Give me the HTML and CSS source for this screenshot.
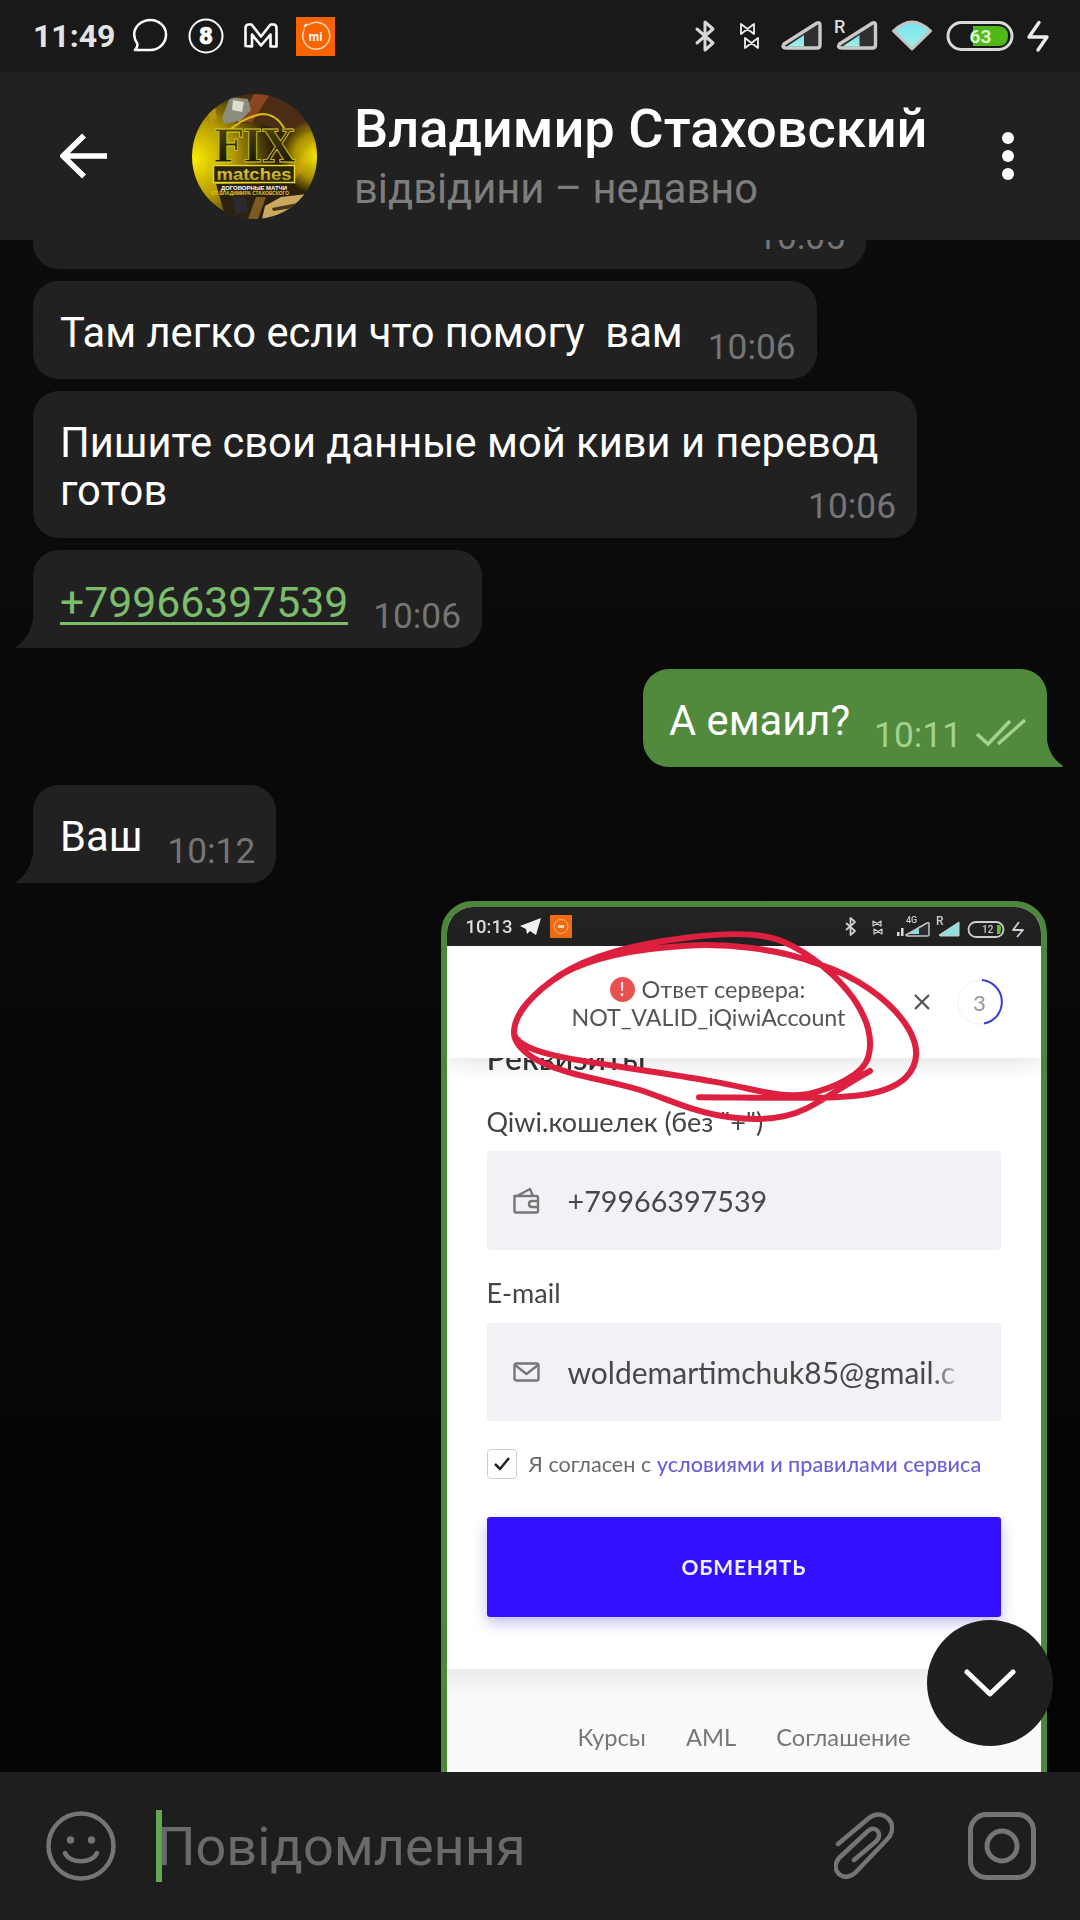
FILE: index.html
```html
<!DOCTYPE html>
<html lang="uk">
<head>
<meta charset="utf-8">
<title>Владимир Стаховский</title>
<link rel="stylesheet" href="styles.css">
</head>
<body>
<div class="app">
  <div class="statusbar">
    <span class="clock">11:49</span>
    <svg class="sb-icon" width="35" height="36" viewBox="133 18 36 36"><path class="ln" d="M151 19.500c8.500 0 16 6.500 16 15s-7 16-16 16c-2 0-3-.2-5-.2H135c2-2 3-4 2.500-6.300-2-3-3.300-6-3.300-9.500 0-8.500 7.800-15 16.800-15z"/></svg>
    <svg class="sb-icon" width="36" height="36" viewBox="187.500 17 36 36"><circle class="ln ln-thin" cx="205.500" cy="35" r="16.500"/><text class="ball-8" x="205.500" y="43">8</text></svg>
    <svg class="sb-icon sb-icon-m" width="34" height="26" viewBox="244 22 34 26"><path class="ln" d="M245.500 45V27q0-3.500 3.500-3.500h2.500L261 35.500l9.500-12h3q3 0 3 3.500v18.500h-6V33.500l-9.500 11-9-11v12z"/></svg>
    <svg class="sb-icon" width="39" height="39" viewBox="296 16 39 39"><rect x="296" y="16" width="39" height="39" fill="#f96400"/><path class="mi-ring" d="M308 24a13.500 13.500 0 1 1-3.500 4"/><path class="mi-tick" d="M304 26l3-3"/><text class="mi-text" x="315.500" y="40">mi</text></svg>
    <svg class="sb-right" width="356" height="40" viewBox="693 16 356 40">
      <defs><linearGradient id="cy" x1="0" y1="0" x2="0" y2="1"><stop offset="0" stop-color="#76e2f2"/><stop offset="1" stop-color="#a3f0e4"/></linearGradient></defs>
      <path class="sr" d="M697 29l16 14-8 7V22l8 7-16 14"/>
      <path class="sr sr-thin" d="M741 24l13 10V24l-13 10zM745 38l13 10V38l-13 10z"/>
      <path class="sig" d="M784 44l33-21q3-1.500 3 2.500V45q0 3-3 3H786q-4.500 0-2-4z"/>
      <path fill="url(#cy)" d="M787 46.500l17-11.500v11.500z"/>
      <text class="sr-r" x="834" y="33">R</text>
      <path class="sig" d="M839.500 44l33-21q3-1.500 3 2.500V45q0 3-3 3h-31q-4.500 0-2-4z"/>
      <path fill="url(#cy)" d="M842.500 46.500l17-11.500v11.500z"/>
      <path class="wifi" fill="url(#cy)" d="M893.500 31q18.500-18 37 0l-18.500 18z"/>
      <rect class="batt" x="948" y="22.500" width="64" height="27" rx="13.500"/>
      <path class="batt-fill" d="M973 26h25q10 0 10 10t-10 10h-25z"/>
      <text class="batt-text" x="980.500" y="43">63</text>
      <path class="sr sr-bolt" d="M1039 22.500l-10 14.500h18l-9 13"/>
    </svg>
  </div>

  <header class="topbar">
    <svg class="back" width="47" height="46" viewBox="0 0 47 46"><path d="M47 23H3M24 2.500L3 23l21 20.500"/></svg>
    <svg class="avatar" width="125" height="125" viewBox="0 0 125 125">
      <defs>
        <radialGradient id="yg" cx=".02" cy=".52" r=".62"><stop offset="0" stop-color="#f8ea00"/><stop offset=".5" stop-color="#b59a00"/><stop offset="1" stop-color="#2e2208"/></radialGradient>
        <radialGradient id="yr" cx="1" cy=".5" r=".3"><stop offset="0" stop-color="#f7ea00"/><stop offset=".6" stop-color="#c9ad00" stop-opacity=".8"/><stop offset="1" stop-color="#c9ad00" stop-opacity="0"/></radialGradient>
        <linearGradient id="fx" x1="0" y1="0" x2="0" y2="1"><stop offset="0" stop-color="#5a4a08"/><stop offset="1" stop-color="#0d0b02"/></linearGradient>
        <linearGradient id="mt" x1="0" y1="0" x2="0" y2="1"><stop offset="0" stop-color="#efe25a"/><stop offset="1" stop-color="#a39612"/></linearGradient>
        <clipPath id="ac"><circle cx="62.500" cy="62.500" r="62.500"/></clipPath>
      </defs>
      <g clip-path="url(#ac)">
        <rect width="125" height="125" fill="url(#yg)"/>
        <path fill="#4a2d14" d="M36 0h89v34L96 38l-34-10-18 2z"/>
        <path fill="#8a4520" d="M62 0h16L60 28H46zM125 58L104 84l-10-4 31-36zM46 125l18-30h12l-16 30z"/>
        <rect width="125" height="125" fill="url(#yr)"/>
        <path fill="#8b8d7c" d="M30 24L38 3l18 2 3 11-11 11-16 3z"/>
        <path fill="#dedccc" d="M41 6l11 2-2 10-10-2z"/>
        <path fill="#b89310" d="M14 12l8-4 3 16-6 8z"/>
        <path fill="none" stroke="#d8bb10" stroke-width="2" d="M34 40q14-16 36-20 14 0 22 14"/>
        <path fill="#2c2110" d="M24 90h80l-12 35H34z"/>
        <path fill="#2a2a30" d="M40 102l14 2 2 14-12 2z"/>
        <path fill="#7c5a22" d="M56 125l8-22h10l-8 22z"/>
        <path fill="#c9a95e" d="M70 125l3-13 16-9 26-3 4 8-14 17z"/>
        <path fill="#46351a" d="M80 114l26-5-5 5-20 3z"/>
        <text class="av-fix" x="62" y="68" textLength="82" lengthAdjust="spacingAndGlyphs">FIX</text>
        <rect x="21.500" y="71.500" width="81" height="17" fill="#2c2406" stroke="#e4d628" stroke-width="1.500"/>
        <text class="av-matches" x="62" y="85.500" textLength="75" lengthAdjust="spacingAndGlyphs">matches</text>
        <text class="av-l1" x="62" y="95.500" textLength="66" lengthAdjust="spacingAndGlyphs">ДОГОВОРНЫЕ МАТЧИ</text>
        <text class="av-l2" x="58" y="101" textLength="78" lengthAdjust="spacingAndGlyphs">ОТ ВЛАДИМИРА СТАХОВСКОГО</text>
      </g>
    </svg>
    <div class="peer">
      <div class="peer-name">Владимир Стаховский</div>
      <div class="peer-status">відвідини – недавно</div>
    </div>
    <div class="dots"><i></i><i></i><i></i></div>
  </header>

  <main class="chat">
    <div class="bubble in first"><span class="time">10:05</span></div>
    <div class="bubble in"><span class="text">Там легко если что помогу&nbsp; вам</span><span class="time">10:06</span></div>
    <div class="bubble in wrapped">
      <span class="text">Пишите свои данные мой киви и перевод</span>
      <div class="last-line"><span class="text">готов</span><span class="time">10:06</span></div>
    </div>
    <div class="bubble in tailed">
      <a class="text link" href="#">+79966397539</a><span class="time">10:06</span>
      <svg class="tail tail-l" width="18" height="44" viewBox="0 0 18 44"><path d="M18 0C18 18 14 34 0 43q-1 1 1 1h17z"/></svg>
    </div>
    <div class="bubble out tailed">
      <span class="text">А емаил?</span><span class="time">10:11</span>
      <svg class="checks" width="50" height="28" viewBox="0 0 50 28"><path d="M1 15l11 10L34 2M22 25L49 1"/></svg>
      <svg class="tail tail-r" width="18" height="38" viewBox="0 0 18 38"><path d="M0 0C0 16 5 29 16 36q2 2-1 2H0z"/></svg>
    </div>
    <div class="bubble in tailed gap-after"><span class="text">Ваш</span><span class="time">10:12</span>
      <svg class="tail tail-l" width="18" height="44" viewBox="0 0 18 44"><path d="M18 0C18 18 14 34 0 43q-1 1 1 1h17z"/></svg>
    </div>

    <div class="shot">
      <div class="shot-status">
        <span class="shot-clock">10:13</span>
        <svg class="shot-send" width="21" height="17" viewBox="0 0 21 17"><path d="M21 0L0 8l6 3 1 5 3-3 6 4z"/></svg>
        <svg class="shot-mi" width="22" height="23" viewBox="0 0 22 23"><rect width="22" height="23" fill="#ef6c12"/><circle cx="11" cy="11.500" r="7" fill="none" stroke="#f7b27c"/><rect x="8" y="10" width="6" height="3" fill="#f9d0ad"/></svg>
        <svg class="shot-right" width="182" height="30" viewBox="845 910 182 30">
          <path class="ss" d="M846 921l9 8-4.500 4V916l4.500 4-9 8"/>
          <path class="ss ss-thin" d="M873 919l8 5v-5l-8 5zM874 927l8 5v-5l-8 5z"/>
          <rect x="897" y="930" width="2.500" height="4" fill="#ddd"/><rect x="901" y="926" width="2.500" height="8" fill="#ddd"/>
          <text class="ss-t" x="906" y="921">4G</text>
          <path class="ss-sig" d="M906 933l21-12q2-1 2 1v11q0 1-2 1h-20z"/><path fill="#8fdde0" d="M909 932l10-6v6z"/>
          <text class="ss-t ss-r" x="936" y="923">R</text>
          <path fill="#93e0e0" stroke="#ccc" d="M939 933l20-13v14h-19z"/>
          <rect class="ss" x="968.500" y="920" width="35" height="15" rx="7.500"/>
          <path fill="#5fbf30" d="M997 923h3q2 2 0 9h-3z"/>
          <text class="ss-t ss-b" x="982" y="931">12</text>
          <path class="ss" d="M1019 920l-6 8h10l-6 7"/>
        </svg>
      </div>
      <div class="shot-head">
        <div class="alert">
          <div class="alert-top"><span class="alert-mark">!</span><span>Ответ сервера:</span></div>
          <div>NOT_VALID_iQiwiAccount</div>
        </div>
        <svg class="alert-x" width="18" height="18" viewBox="0 0 18 18"><path d="M2 2l14 14M16 2L2 16"/></svg>
        <div class="timer">
          <svg class="timer-ring" width="46" height="46" viewBox="0 0 46 46"><circle class="tr-bg" cx="23" cy="23" r="22"/><path class="tr-arc" d="M25 1a22 22 0 0 1 2 43.500"/></svg>
          <span>3</span>
        </div>
      </div>
      <div class="form">
        <div class="form-title">Реквизиты</div>
        <label class="f-label">Qiwi.кошелек (без "+")</label>
        <div class="field">
          <svg class="f-icon" width="27" height="27" viewBox="0 0 27 27"><path d="M1.500 9h22q1.500 0 1.500 2v13q0 1.500-1.500 1.500H3q-1.500 0-1.500-1.500zM4 9L17 2l3 7M25 14h-6q-3 0-3 3t3 3h6"/></svg>
          <span class="f-value">+79966397539</span>
        </div>
        <label class="f-label f-label-2">E-mail</label>
        <div class="field field-mail">
          <svg class="f-icon" width="27" height="20" viewBox="0 0 27 20"><rect x="1.500" y="1.500" width="24" height="17" rx="2"/><path d="M2 3l11.500 9L25 3"/></svg>
          <span class="f-value">woldemartimchuk85@gmail.c</span>
        </div>
        <div class="agree">
          <span class="check-box"><svg width="18" height="16" viewBox="0 0 18 16"><path d="M2 8l5 5L16 2"/></svg></span>
          <span>Я согласен с <a class="agree-link" href="#">условиями и правилами сервиса</a></span>
        </div>
        <div class="submit">ОБМЕНЯТЬ</div>
      </div>
      <div class="shot-foot"><span>Курсы</span><span>AML</span><span>Соглашение</span></div>
      <svg class="scribble" width="430" height="205" viewBox="0 0 1290 615"><path d="M1110 438C1040 475 990 515 920 550C860 580 790 590 690 577C590 565 510 525 420 495C320 465 200 450 120 410C70 385 40 350 42 320C45 260 100 205 180 150C280 85 420 55 560 38C660 25 780 20 850 50C930 85 1010 150 1060 220C1105 285 1120 340 1105 395C1090 450 1000 490 920 508C840 520 780 495 640 470C480 440 300 420 180 395C110 380 50 360 42 325C40 270 100 200 190 145C290 90 420 70 560 62C680 55 830 70 950 115C1060 150 1170 220 1225 310C1260 370 1255 420 1215 460C1160 510 1060 518 930 518C820 520 700 517 597 517"/></svg>
    </div>

    <button class="scroll-down" type="button" aria-label="Вниз"><svg width="52" height="28" viewBox="0 0 52 28"><path d="M3 3l23 22L49 3"/></svg></button>
  </main>

  <footer class="composer">
    <svg class="c-smile" width="70" height="70" viewBox="0 0 70 70"><circle cx="35" cy="35" r="32.500"/><path d="M19 42c5 11 27 11 32 0"/><circle class="eye" cx="24.500" cy="29" r="3.700"/><circle class="eye" cx="45.500" cy="29" r="3.700"/></svg>
    <span class="caret"></span>
    <span class="placeholder">Повідомлення</span>
    <svg class="c-clip" width="60" height="68" viewBox="0 0 60 68"><path d="M4 32L35 6c7-5.500 15-4 20 1.500s4 14-2 20L22 60c-6 6-13 6-17 2-5-4.500-4-11 0-16l29-27c3-3 7-3 9.500 0s2 6.500-1 10L20 48"/></svg>
    <svg class="c-cam" width="68" height="68" viewBox="0 0 68 68"><rect x="2.500" y="2.500" width="63" height="63" rx="16"/><circle cx="34" cy="34" r="15"/></svg>
  </footer>
</div>
</body>
</html>
```

FILE: styles.css
```css
* { box-sizing: border-box; }
html, body { margin: 0; padding: 0; background: #0a0a0a; }
body { font-family: Roboto, "Noto Sans", sans-serif; }
svg { display: block; flex: none; }

.app { width: 1080px; height: 1920px; display: flex; flex-direction: column; overflow: hidden; }

/* status bar */
.statusbar { height: 72px; flex: none; background: #191919; display: flex; align-items: center; padding-left: 33px; }
.clock { font-size: 32px; font-weight: 700; color: #e4e4e4; width: 81px; margin-right: 19px; line-height: 72px; white-space: nowrap; }
.sb-icon { margin-right: 20px; }
.sb-icon-m { margin-right: 18px; }
.sb-right { margin-left: auto; margin-right: 31px; }
.ln { fill: none; stroke: #fff; stroke-width: 2.600; stroke-linejoin: round; }
.ln-thin { stroke-width: 2; }
.ball-8 { font: 900 24px Roboto, sans-serif; fill: #fff; stroke: #fff; stroke-width: .6; text-anchor: middle; }
.mi-ring { fill: none; stroke: #ffd9bf; stroke-width: 1.500; }
.mi-tick { stroke: #fff; stroke-width: 2; }
.mi-text { font: 700 12px "Liberation Sans", sans-serif; fill: #fff; text-anchor: middle; }
.sr { fill: none; stroke: #d8d8d8; stroke-width: 3; stroke-linecap: round; stroke-linejoin: round; }
.sr-thin { stroke-width: 1.800; stroke: #eee; }
.sr-bolt { stroke: #ececec; stroke-width: 3.400; }
.sig { fill: #2f2f2f; stroke: #c9c9c9; stroke-width: 3.400; stroke-linejoin: round; }
.sr-r { font: 500 18px Roboto, sans-serif; fill: #dcdcdc; }
.wifi { stroke: #c4c4c4; stroke-width: 3; stroke-linejoin: round; }
.batt { fill: none; stroke: #dadada; stroke-width: 3; }
.batt-fill { fill: #4fb91a; }
.batt-text { font: 700 19px Roboto, sans-serif; fill: #dff7c9; text-anchor: middle; }

/* top bar */
.topbar { height: 168px; flex: none; background: #212121; display: flex; align-items: center; padding-left: 60px; position: relative; z-index: 3; }
.back path { fill: none; stroke: #fff; stroke-width: 5.500; }
.avatar { margin-left: 85px; }
.av-fix { font: 700 44px "DejaVu Serif", serif; fill: url(#fx); stroke: #dccb20; stroke-width: .9; text-anchor: middle; }
.av-matches { font: 700 17px "Liberation Sans", sans-serif; fill: url(#mt); text-anchor: middle; }
.av-l1 { font: 700 5px "Liberation Sans", sans-serif; fill: #fff; text-anchor: middle; }
.av-l2 { font: 700 4.500px "Liberation Sans", sans-serif; fill: #e2c92c; text-anchor: middle; }
.peer { margin-left: 37px; white-space: nowrap; }
.peer-name { font-size: 54.200px; font-weight: 500; line-height: 60px; color: #fff; margin-top: 2px; }
.peer-status { font-size: 41.700px; line-height: 54px; color: #7d7d7d; margin-top: 3px; }
.dots { margin-left: auto; margin-right: 66px; display: flex; flex-direction: column; gap: 6px; }
.dots i { width: 12px; height: 12px; border-radius: 50%; background: #fff; display: block; }

/* chat */
.chat { flex: 1; min-height: 0; position: relative; overflow: hidden; display: flex; flex-direction: column; align-items: flex-start; padding: 0 33px; background: linear-gradient(#0c0c0c, #040404); }

.bubble { position: relative; display: flex; align-items: flex-start; flex: none; padding: 28px 21px 12px 27px; border-radius: 26px; background: #212121; margin-bottom: 12px; }
.bubble.first { margin-top: -69px; width: 833px; height: 98px; justify-content: flex-end; }
.text { font-size: 41.700px; line-height: 48px; color: #fff; white-space: pre-wrap; }
.link { font-size: 42.700px; color: #7cbd6c; text-decoration: underline; text-decoration-thickness: 3px; text-underline-offset: 5px; }
.time { font-size: 35.300px; line-height: 40px; color: #757575; margin-top: 18px; margin-left: 25px; white-space: nowrap; }
.bubble.first .time { margin-left: 0; }

.wrapped { flex-direction: column; width: 884px; }
.last-line { display: flex; align-items: flex-start; justify-content: space-between; align-self: stretch; }
.last-line .time { margin-top: 19px; }

.tailed { border-bottom-left-radius: 0; }
.in.tailed { margin-bottom: 21px; }
.in.tailed.gap-after { margin-bottom: 18px; }
.tail { position: absolute; bottom: 0; }
.tail-l { left: -17px; fill: #212121; }
.tail path { fill: inherit; }
.out { align-self: flex-end; background: #518a3c; border-bottom-left-radius: 26px; border-bottom-right-radius: 0; margin-bottom: 18px; padding-left: 26px; }
.out .time { color: #a3d28e; margin-left: 24px; }
.tail-r { right: -17px; fill: #518a3c; }
.checks { margin-left: 14px; margin-top: 22px; }
.checks path { fill: none; stroke: #a3d28e; stroke-width: 3.500; }

/* screenshot attachment */
.shot { align-self: flex-end; position: relative; flex: none; width: 606px; height: 980px; border: 6px solid #4e873a; border-radius: 32px; overflow: hidden; background: #fff; display: flex; flex-direction: column; }
.shot-status { height: 39px; flex: none; background: #222; display: flex; align-items: center; padding-left: 18.500px; filter: blur(.5px); }
.shot-clock { font-size: 18.500px; font-weight: 500; color: #ddd; width: 43px; white-space: nowrap; }
.shot-send { margin-left: 11px; }
.shot-send path { fill: #f2f2f2; }
.shot-mi { margin-left: 9px; }
.shot-right { margin-left: auto; margin-right: 14.500px; }
.ss { fill: none; stroke: #cfcfcf; stroke-width: 1.800; stroke-linejoin: round; }
.ss-thin { stroke-width: 1.200; }
.ss-sig { fill: #2d2d2d; stroke: #c6c6c6; stroke-width: 1.500; }
.ss-t { font: 500 9px Roboto, sans-serif; fill: #ccc; }
.ss-r { font-size: 12px; }
.ss-b { font-size: 10px; }

.shot-head { height: 112px; flex: none; background: #fff; display: flex; align-items: center; position: relative; z-index: 1; box-shadow: 0 4px 22px rgba(0, 0, 0, .12); padding-left: 124.500px; }
.alert { width: 272px; flex: none; text-align: center; font-size: 23.200px; line-height: 28px; color: #555; white-space: nowrap; font-family: Lato, sans-serif; filter: blur(.5px); }
.alert-top { display: flex; justify-content: center; align-items: center; gap: 7px; margin-top: 2px; font-size: 23.500px; }
.alert-mark { width: 25px; height: 25px; border-radius: 50%; background: #e8514f; color: #fde; font-size: 18px; font-weight: 700; line-height: 25px; text-align: center; }
.alert-x { margin-left: 69px; }
.alert-x path { fill: none; stroke: #555; stroke-width: 2.300; }
.timer { position: relative; width: 46px; height: 46px; margin-left: 26px; display: flex; align-items: center; justify-content: center; font-family: Lato, sans-serif; font-size: 22px; color: #999; }
.timer-ring { position: absolute; inset: 0; }
.tr-bg { fill: none; stroke: #f0f0f0; stroke-width: 1; }
.tr-arc { fill: none; stroke: #3b3bd8; stroke-width: 2; }

.form { flex: none; background: #fff; padding: 0 40px 52px 39.500px; font-family: Lato, sans-serif; filter: blur(.5px); }
.form-title { font-size: 32px; font-weight: 500; line-height: 30px; color: #333; margin-top: -15px; }
.f-label { display: block; font-size: 27px; line-height: 30px; color: #444; margin-top: 34px; white-space: nowrap; }
.f-label-2 { margin-top: 28px; }
.field { height: 99px; margin-top: 14px; background: #f0f2f6; border-radius: 3px; display: flex; align-items: center; padding-left: 26px; overflow: hidden; position: relative; }
.field-mail { height: 98px; margin-top: 15px; }
.field-mail::after { content: ""; position: absolute; top: 0; bottom: 0; right: 0; width: 71px; background: linear-gradient(90deg, rgba(240, 242, 246, 0), rgba(240, 242, 246, .85) 45%, #f0f2f6 75%); }
.f-icon path, .f-icon rect { fill: none; stroke: #777; stroke-width: 2.400; stroke-linejoin: round; }
.f-value { margin-left: 28px; font-size: 28.700px; color: #484848; white-space: nowrap; }
.field-mail .f-value { font-size: 30px; }
.agree { display: flex; align-items: center; gap: 12px; margin-top: 28px; height: 29px; font-size: 21.600px; color: #6a6a6a; white-space: nowrap; }
.check-box { width: 30px; height: 30px; border: 1.500px solid #ccc; border-radius: 4px; background: #fff; display: flex; align-items: center; justify-content: center; }
.check-box path { fill: none; stroke: #222; stroke-width: 2.500; }
.agree-link { color: #6a5fd8; text-decoration: none; font-weight: 500; }
.submit { height: 100px; margin-top: 39px; background: #3010ff; border-radius: 3px; color: #f0eeff; font-size: 21px; font-weight: 700; line-height: 100px; text-align: center; letter-spacing: .8px; box-shadow: 0 6px 14px rgba(48, 40, 220, .3); }

.shot-foot { flex: 1; display: flex; justify-content: center; gap: 40px; padding-top: 53px; font-family: Lato, sans-serif; font-size: 23.700px; line-height: 30px; color: #777; background: linear-gradient(#ececec, #f9f9f9 30px, #fbfbfb); filter: blur(.4px); }

.scribble { position: absolute; left: 53px; top: 18px; z-index: 2; pointer-events: none; filter: blur(.4px); }
.scribble path { fill: none; stroke: #dd2040; stroke-width: 18; stroke-linecap: round; stroke-linejoin: round; }

.scroll-down { position: absolute; left: 927px; top: 1380px; width: 126px; height: 126px; border: 0; padding: 0; border-radius: 50%; background: #1f1f1f; display: flex; align-items: center; justify-content: center; z-index: 4; }
.scroll-down path { fill: none; stroke: #fff; stroke-width: 5; stroke-linecap: round; stroke-linejoin: round; }

/* composer */
.composer { height: 148px; flex: none; background: #1e1e1e; display: flex; align-items: center; padding-left: 46px; position: relative; z-index: 3; }
.c-smile circle, .c-smile path { fill: none; stroke: #757575; stroke-width: 4.500; stroke-linecap: round; }
.c-smile .eye { fill: #757575; stroke: none; }
.caret { width: 6px; height: 72px; background: #64a84f; margin-left: 40px; }
.placeholder { font-size: 54px; line-height: 72px; color: #6a6a6a; white-space: nowrap; margin-left: -5px; padding-top: 2px; }
.c-clip { margin-left: auto; }
.c-clip path { fill: none; stroke: #757575; stroke-width: 4.500; stroke-linecap: round; stroke-linejoin: round; }
.c-cam { margin-left: 74px; margin-right: 44px; }
.c-cam rect, .c-cam circle { fill: none; stroke: #757575; stroke-width: 5; }
```
